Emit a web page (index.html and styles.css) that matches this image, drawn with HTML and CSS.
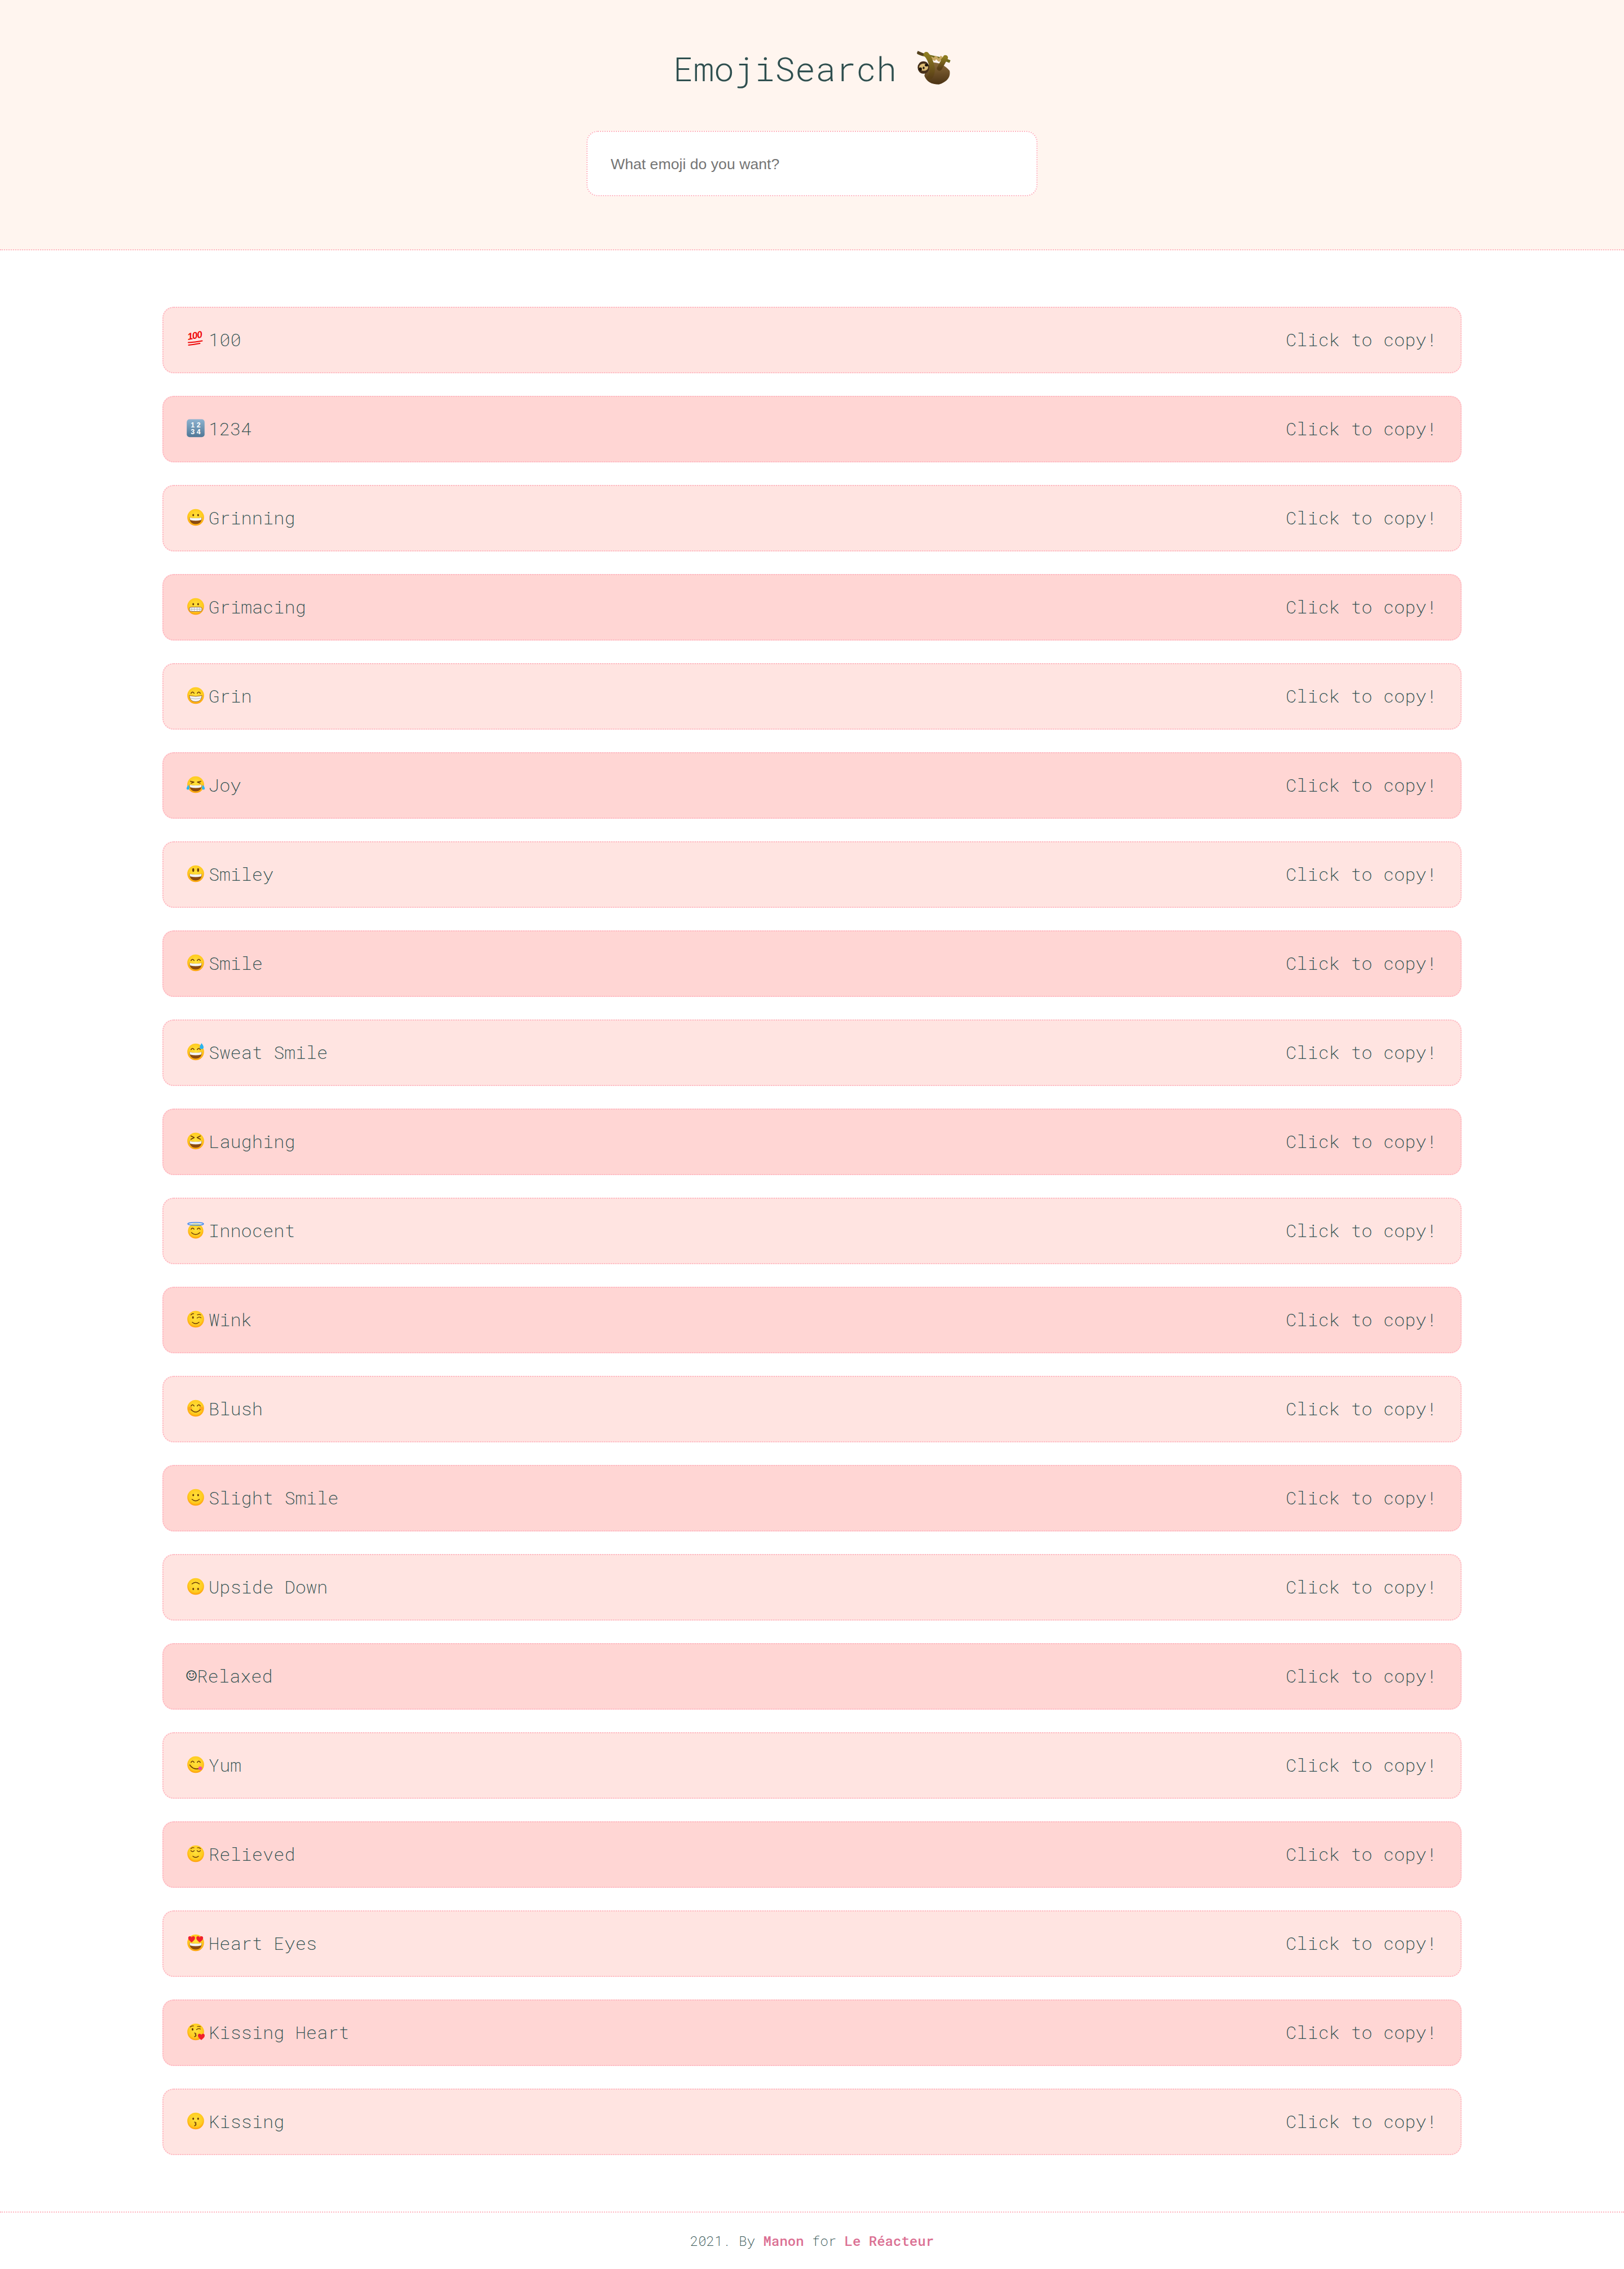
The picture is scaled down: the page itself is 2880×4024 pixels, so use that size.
FILE: index.html
```html
<!DOCTYPE html>
<html lang="en">
<head>
  <meta charset="UTF-8" />
  <title>EmojiSearch</title>
  <link rel="stylesheet" href="styles.css">
</head>
<body>

  <!-- shared emoji drawings -->
  <svg class="sprites" xmlns="http://www.w3.org/2000/svg">
    <defs>
      <radialGradient id="skin" cx="0.5" cy="0.42" r="0.62">
        <stop offset="0" stop-color="#ffe13c" />
        <stop offset="0.68" stop-color="#ffcb1f" />
        <stop offset="0.92" stop-color="#ff9f0a" />
        <stop offset="1" stop-color="#f98a00" />
      </radialGradient>
      <linearGradient id="tile" x1="0" y1="0" x2="0" y2="1">
        <stop offset="0" stop-color="#8db2cf" />
        <stop offset="1" stop-color="#4f7796" />
      </linearGradient>
      <linearGradient id="fur" x1="0" y1="0" x2="0" y2="1">
        <stop offset="0" stop-color="#8a6a3a" />
        <stop offset="1" stop-color="#4b3213" />
      </linearGradient>
      <linearGradient id="limb" x1="0" y1="0" x2="0" y2="1">
        <stop offset="0" stop-color="#8d7b20" />
        <stop offset="1" stop-color="#5a3f17" />
      </linearGradient>

      <circle id="face" cx="17" cy="18.5" r="14.8" fill="url(#skin)" />
      <g id="eyes-dot"><ellipse cx="12.7" cy="14.5" rx="1.5" ry="2" fill="#6a3a08" /><ellipse cx="21.3" cy="14.5" rx="1.5" ry="2" fill="#6a3a08" /></g>
      <path id="eyes-happy" d="M8.8 14.5 Q11.5 10.2 14.2 14.5 M19.8 14.5 Q22.5 10.2 25.2 14.5" fill="none" stroke="#6a3a08" stroke-width="1.5" stroke-linecap="round" />
      <g id="mouth-open">
        <path d="M5.8 18.5 Q17 21.5 28.2 18.5 Q27.6 30.5 17 30.5 Q6.4 30.5 5.8 18.5Z" fill="#8b4a0e" />
        <path d="M6.4 18.7 Q17 21.5 27.6 18.7 Q27.4 22.4 26.6 23.2 Q17 25.6 7.4 23.2 Q6.6 22.4 6.4 18.7Z" fill="#f4f4f4" />
      </g>
      <path id="mouth-smile" d="M9 21 Q17 29.5 25 21" fill="none" stroke="#6a3a08" stroke-width="1.5" stroke-linecap="round" />
      <path id="heart" d="M0 -3 C-1.5 -6.5 -6.5 -5.5 -6 -1.5 C-5.7 1.5 -2 4 0 6 C2 4 5.7 1.5 6 -1.5 C6.5 -5.5 1.5 -6.5 0 -3Z" fill="#f0202d" />

      <symbol id="e-100" viewBox="0 0 40 40">
        <text class="glyph-hundred" x="3.5" y="20" transform="rotate(-10 3.5 20)">100</text>
        <path d="M4 24.5 Q16 24 28.5 21.6 M4.5 29 Q14 28.2 24.5 26" fill="none" stroke="#ee0a0a" stroke-width="2" stroke-linecap="round" />
      </symbol>
      <symbol id="e-1234" viewBox="0 0 40 40">
        <rect x="1.2" y="2.6" width="31.6" height="31.6" rx="5" fill="url(#tile)" />
        <text class="glyph-tile" x="17" y="17">1 2</text>
        <text class="glyph-tile" x="17" y="29">3 4</text>
      </symbol>
      <symbol id="e-grinning" viewBox="0 0 40 40"><use href="#face" /><use href="#eyes-dot" /><use href="#mouth-open" /></symbol>
      <symbol id="e-grimacing" viewBox="0 0 40 40">
        <use href="#face" /><use href="#eyes-dot" />
        <rect x="5.5" y="19.5" width="23" height="8" rx="4" fill="#f0f0f0" stroke="#8b4a0e" stroke-width="0.8" />
        <path d="M5.5 23.5 H28.5 M10 19.5 V27.5 M14.5 19.5 V27.5 M19.5 19.5 V27.5 M24 19.5 V27.5" stroke="#a8a8a8" stroke-width="0.7" />
      </symbol>
      <symbol id="e-grin" viewBox="0 0 40 40">
        <use href="#face" /><use href="#eyes-happy" />
        <path d="M5.8 18.5 Q17 21.5 28.2 18.5 Q27.6 29.5 17 29.5 Q6.4 29.5 5.8 18.5Z" fill="#f4f4f4" stroke="#8b4a0e" stroke-width="0.8" />
        <path d="M6.6 23 Q17 26 27.4 23" fill="none" stroke="#a8a8a8" stroke-width="0.8" />
      </symbol>
      <symbol id="e-joy" viewBox="0 0 40 40">
        <use href="#face" />
        <path d="M7.5 12.5 L14 14 L9 16 M26.5 12.5 L20 14 L25 16" fill="none" stroke="#6a3a08" stroke-width="1.4" stroke-linecap="round" stroke-linejoin="round" />
        <use href="#mouth-open" />
        <path d="M4 19 Q0 24 1 26.5 Q3 28.5 5.5 26.5 Q7 24 4 19Z M30 19 Q34 24 33 26.5 Q31 28.5 28.5 26.5 Q27 24 30 19Z" fill="#2bb5f2" />
      </symbol>
      <symbol id="e-smiley" viewBox="0 0 40 40">
        <use href="#face" />
        <ellipse cx="12.7" cy="12" rx="1.7" ry="3.2" fill="#6a3a08" /><ellipse cx="21.3" cy="12" rx="1.7" ry="3.2" fill="#6a3a08" />
        <use href="#mouth-open" />
      </symbol>
      <symbol id="e-smile" viewBox="0 0 40 40"><use href="#face" /><use href="#eyes-happy" /><use href="#mouth-open" /></symbol>
      <symbol id="e-sweat" viewBox="0 0 40 40">
        <use href="#face" /><use href="#eyes-happy" /><use href="#mouth-open" />
        <path d="M27.5 3 Q23.5 9 24.2 11.2 Q25.5 14 28.5 13.5 Q31.5 12.5 31 9.5 Q30.5 7 27.5 3Z" fill="#29b4ef" />
      </symbol>
      <symbol id="e-laughing" viewBox="0 0 40 40">
        <use href="#face" />
        <path d="M8.5 9.5 L14.5 12.5 L8.5 15.5 M25.5 9.5 L19.5 12.5 L25.5 15.5" fill="none" stroke="#6a3a08" stroke-width="1.5" stroke-linecap="round" stroke-linejoin="round" />
        <use href="#mouth-open" />
      </symbol>
      <symbol id="e-innocent" viewBox="0 0 40 40">
        <circle cx="17" cy="20" r="13.6" fill="url(#skin)" />
        <path d="M9 17 Q11.5 13 14.2 17 M19.8 17 Q22.5 13 25 17" fill="none" stroke="#6a3a08" stroke-width="1.5" stroke-linecap="round" />
        <path d="M9.5 23 Q17 30 24.5 23" fill="none" stroke="#6a3a08" stroke-width="1.5" stroke-linecap="round" />
        <ellipse cx="17" cy="7.5" rx="14" ry="2.6" fill="#bfe6fb" fill-opacity="0.55" stroke="#2c7df0" stroke-width="1.3" />
      </symbol>
      <symbol id="e-wink" viewBox="0 0 40 40">
        <use href="#face" />
        <ellipse cx="12.2" cy="15.5" rx="1.5" ry="2.2" fill="#6a3a08" />
        <path d="M8.5 11 Q10.5 8.5 13.5 8.8 M20 10.8 Q23.5 9.5 26 11 M19.5 16.5 Q23 13.5 26.5 16" fill="none" stroke="#6a3a08" stroke-width="1.3" stroke-linecap="round" />
        <path d="M11 24 Q17 29 23 24" fill="none" stroke="#6a3a08" stroke-width="1.5" stroke-linecap="round" />
      </symbol>
      <symbol id="e-blush" viewBox="0 0 40 40">
        <use href="#face" />
        <circle cx="7" cy="19" r="3.6" fill="#ff8a1e" fill-opacity="0.55" /><circle cx="27" cy="19" r="3.6" fill="#ff8a1e" fill-opacity="0.55" />
        <use href="#eyes-happy" /><use href="#mouth-smile" />
      </symbol>
      <symbol id="e-slight" viewBox="0 0 40 40">
        <use href="#face" /><use href="#eyes-dot" />
        <path d="M10.5 22 Q17 27.5 23.5 22" fill="none" stroke="#6a3a08" stroke-width="1.5" stroke-linecap="round" />
      </symbol>
      <symbol id="e-upside" viewBox="0 0 40 40">
        <use href="#face" />
        <path d="M10.5 14 Q17 8.5 23.5 14" fill="none" stroke="#6a3a08" stroke-width="1.5" stroke-linecap="round" />
        <ellipse cx="12.7" cy="23" rx="1.5" ry="2" fill="#6a3a08" /><ellipse cx="21.3" cy="23" rx="1.5" ry="2" fill="#6a3a08" />
      </symbol>
      <symbol id="e-yum" viewBox="0 0 40 40">
        <use href="#face" /><use href="#eyes-happy" />
        <path d="M6.5 19 Q14 30 27 24" fill="none" stroke="#6a3a08" stroke-width="1.5" stroke-linecap="round" />
        <circle cx="25" cy="25" r="3.2" fill="#ee4f9c" />
      </symbol>
      <symbol id="e-relieved" viewBox="0 0 40 40">
        <use href="#face" />
        <path d="M8.5 13 Q11.5 16.5 14.5 13 M19.5 13 Q22.5 16.5 25.5 13 M8.5 9.5 Q11 7 14 8 M20 8 Q23 7 25.5 9.5" fill="none" stroke="#6a3a08" stroke-width="1.3" stroke-linecap="round" />
        <path d="M12 23 Q17 27 22 23" fill="none" stroke="#6a3a08" stroke-width="1.5" stroke-linecap="round" />
      </symbol>
      <symbol id="e-hearteyes" viewBox="0 0 40 40">
        <use href="#face" /><use href="#mouth-open" />
        <use href="#heart" x="9.8" y="12" /><use href="#heart" x="24.2" y="12" />
      </symbol>
      <symbol id="e-kissheart" viewBox="0 0 40 40">
        <use href="#face" />
        <ellipse cx="11.5" cy="14" rx="1.5" ry="2.2" fill="#6a3a08" />
        <path d="M7.5 9.8 Q9.5 7.5 13 8 M18.5 14.5 Q22 11.5 25.5 13.5 M20 9 Q23 8 25.5 9.5" fill="none" stroke="#6a3a08" stroke-width="1.3" stroke-linecap="round" />
        <path d="M15 20.5 Q19 21.5 16.5 23.5 Q19.5 25 15 27" fill="none" stroke="#6a3a08" stroke-width="1.5" stroke-linecap="round" />
        <use href="#heart" x="27" y="27" />
      </symbol>
      <symbol id="e-kissing" viewBox="0 0 40 40">
        <use href="#face" /><use href="#eyes-dot" />
        <path d="M15 20.5 Q19.5 21.5 16.5 23.5 Q19.5 25 15 27" fill="none" stroke="#6a3a08" stroke-width="1.5" stroke-linecap="round" />
      </symbol>
    </defs>
  </svg>

  <header class="top">
    <h1 class="title">
      <span class="title-text">EmojiSearch&nbsp;</span>
      <svg class="sloth" viewBox="78 73.5 180 225" xmlns="http://www.w3.org/2000/svg">
        <path d="M84 100 C130 122 200 122 254 146" fill="none" stroke="#6f6a1e" stroke-width="15" />
        <path d="M80 96 L112 110" stroke="#54401f" stroke-width="15" />
        <path d="M152 124 L172 135 L178 122 L196 140 L210 118" fill="none" stroke="#c8a862" stroke-width="13" stroke-linejoin="round" />
        <path d="M155 150 Q215 150 252 195 Q262 245 195 268 Q135 268 118 222 Q125 175 155 150Z" fill="url(#fur)" />
        <path d="M128 108 Q150 130 160 180 Q162 215 145 232" fill="none" stroke="url(#limb)" stroke-width="27" stroke-linecap="round" />
        <path d="M230 125 Q216 150 198 182" fill="none" stroke="url(#limb)" stroke-width="27" stroke-linecap="round" />
        <ellipse cx="113" cy="178" rx="31" ry="33" fill="#47301a" />
        <ellipse cx="114" cy="176" rx="24" ry="19" fill="#dcbc76" />
        <ellipse cx="97" cy="186" rx="8" ry="9" fill="#1d140a" />
        <ellipse cx="129" cy="165" rx="9" ry="7" fill="#1d140a" />
        <ellipse cx="114" cy="180" rx="5" ry="7" fill="#2c2013" />
      </svg>
    </h1>
    <input class="search" type="text" placeholder="What emoji do you want?" />
  </header>

  <main class="list">
    <div class="line"><span class="name"><svg class="emoji"><use href="#e-100" /></svg>100</span><span>Click to copy!</span></div>
    <div class="line"><span class="name"><svg class="emoji"><use href="#e-1234" /></svg>1234</span><span>Click to copy!</span></div>
    <div class="line"><span class="name"><svg class="emoji"><use href="#e-grinning" /></svg>Grinning</span><span>Click to copy!</span></div>
    <div class="line"><span class="name"><svg class="emoji"><use href="#e-grimacing" /></svg>Grimacing</span><span>Click to copy!</span></div>
    <div class="line"><span class="name"><svg class="emoji"><use href="#e-grin" /></svg>Grin</span><span>Click to copy!</span></div>
    <div class="line"><span class="name"><svg class="emoji"><use href="#e-joy" /></svg>Joy</span><span>Click to copy!</span></div>
    <div class="line"><span class="name"><svg class="emoji"><use href="#e-smiley" /></svg>Smiley</span><span>Click to copy!</span></div>
    <div class="line"><span class="name"><svg class="emoji"><use href="#e-smile" /></svg>Smile</span><span>Click to copy!</span></div>
    <div class="line"><span class="name"><svg class="emoji"><use href="#e-sweat" /></svg>Sweat Smile</span><span>Click to copy!</span></div>
    <div class="line"><span class="name"><svg class="emoji"><use href="#e-laughing" /></svg>Laughing</span><span>Click to copy!</span></div>
    <div class="line"><span class="name"><svg class="emoji"><use href="#e-innocent" /></svg>Innocent</span><span>Click to copy!</span></div>
    <div class="line"><span class="name"><svg class="emoji"><use href="#e-wink" /></svg>Wink</span><span>Click to copy!</span></div>
    <div class="line"><span class="name"><svg class="emoji"><use href="#e-blush" /></svg>Blush</span><span>Click to copy!</span></div>
    <div class="line"><span class="name"><svg class="emoji"><use href="#e-slight" /></svg>Slight Smile</span><span>Click to copy!</span></div>
    <div class="line"><span class="name"><svg class="emoji"><use href="#e-upside" /></svg>Upside Down</span><span>Click to copy!</span></div>
    <div class="line"><span class="name"><span class="text-smiley">☺</span>Relaxed</span><span>Click to copy!</span></div>
    <div class="line"><span class="name"><svg class="emoji"><use href="#e-yum" /></svg>Yum</span><span>Click to copy!</span></div>
    <div class="line"><span class="name"><svg class="emoji"><use href="#e-relieved" /></svg>Relieved</span><span>Click to copy!</span></div>
    <div class="line"><span class="name"><svg class="emoji"><use href="#e-hearteyes" /></svg>Heart Eyes</span><span>Click to copy!</span></div>
    <div class="line"><span class="name"><svg class="emoji"><use href="#e-kissheart" /></svg>Kissing Heart</span><span>Click to copy!</span></div>
    <div class="line"><span class="name"><svg class="emoji"><use href="#e-kissing" /></svg>Kissing</span><span>Click to copy!</span></div>
  </main>

  <footer class="bottom">
    <p>2021. By <a href="#">Manon</a> for <a href="#">Le Réacteur</a></p>
  </footer>

</body>
</html>
```

FILE: styles.css
```css
* {
  box-sizing: border-box;
}
body {
  margin: 0;
  font-family: 'Roboto Mono', 'Liberation Mono', monospace;
  font-weight: 200;
  color: #2f4f4f;
  background-color: #fff;
}
.sprites {
  display: block;
  width: 0;
  height: 0;
}

/* header */
.top {
  display: flex;
  flex-direction: column;
  align-items: center;
  height: 444px;
  padding-top: 82px;
  background-color: #fff5ef;
  border-bottom: 2px dotted #ffb6c1;
}
.title {
  display: flex;
  align-items: center;
  height: 80px;
  margin: 0 0 70px 0;
  font-size: 60px;
  font-weight: 300;
  white-space: pre;
}
.title-text {
  margin-bottom: 3px;
}
.sloth {
  width: 60px;
  height: 75px;
}
.search {
  width: 800px;
  height: 116px;
  padding: 2px 40px 0 41px;
  font-family: 'Liberation Sans', Arial, sans-serif;
  font-size: 26.67px;
  font-weight: 400;
  background: #fff;
  border: 2px dotted #ffb6c1;
  border-radius: 20px;
  outline: none;
}
.search::placeholder {
  color: #757575;
}

/* rows */
.list {
  display: flex;
  flex-direction: column;
  gap: 40px;
  width: 2304px;
  margin: 0 auto;
  padding: 100px 0;
}
.line {
  display: flex;
  justify-content: space-between;
  align-items: center;
  height: 118px;
  padding: 0 41px 2px 40px;
  font-size: 32px;
  line-height: 40px;
  background-color: #ffe4e1;
  border: 2px dotted #ffb6c1;
  border-radius: 20px;
}
.line:nth-child(even) {
  background-color: #ffd6d4;
}
.name {
  display: flex;
  align-items: center;
}
.emoji {
  width: 40px;
  height: 40px;
  margin-bottom: -2px;
}
.text-smiley {
  font-family: 'DejaVu Sans Mono', monospace;
  font-weight: 700;
}
.glyph-hundred {
  font-family: 'Liberation Sans', Arial, sans-serif;
  font-size: 17px;
  font-style: italic;
  font-weight: 700;
  letter-spacing: -1px;
  fill: #ee0a0a;
}
.glyph-tile {
  font-family: 'Liberation Sans', Arial, sans-serif;
  font-size: 12.5px;
  font-weight: 700;
  text-anchor: middle;
  fill: #fff;
}

/* footer */
.bottom {
  height: 102px;
  border-top: 2px dotted #ffb6c1;
}
.bottom p {
  margin: 0;
  font-size: 24px;
  line-height: 100px;
  text-align: center;
}
.bottom a {
  font-weight: 500;
  color: #db7093;
  text-decoration: none;
}
```
